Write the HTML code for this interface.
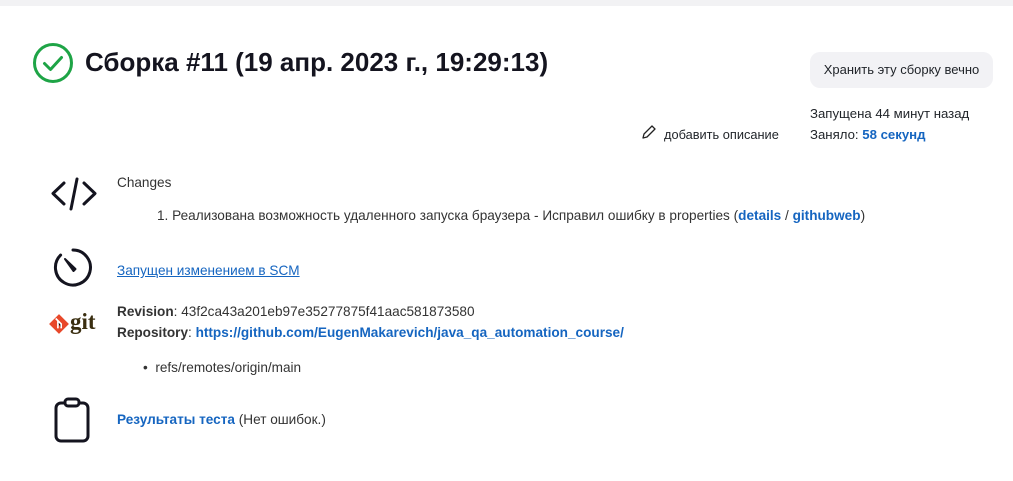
<!DOCTYPE html><html><head><meta charset="utf-8"><style>
body{margin:0;width:1013px;height:481px;background:#fff;font-family:"Liberation Sans",sans-serif;color:#1f2328;position:relative;overflow:hidden;font-size:13.6px}
.top{position:absolute;left:0;top:0;width:1013px;height:6px;background:#f2f2f4}
.a{position:absolute;white-space:nowrap}
a,.l{color:#1565c0;text-decoration:none;font-weight:bold}
</style></head><body>
<div class="top"></div>
<svg class="a" style="left:32px;top:42px" width="42" height="42" viewBox="0 0 42 42"><circle cx="21" cy="21" r="18.5" fill="none" stroke="#1ea446" stroke-width="3"/><path d="M12.5 21.5l6 6 11-12" fill="none" stroke="#1ea446" stroke-width="3" stroke-linecap="round" stroke-linejoin="round"/></svg>
<div class="a" style="left:85px;top:47px;font-size:26px;font-weight:bold;color:#14141f">Сборка #11 (19 апр. 2023 г., 19:29:13)</div>
<div class="a" style="left:810px;top:52px;width:183px;height:36px;background:#f2f2f5;border-radius:10px;text-align:center;line-height:36px;font-size:13px">Хранить эту сборку вечно</div>
<div class="a" style="left:810px;top:106px;font-size:13.2px">Запущена 44 минут назад</div>
<div class="a" style="left:810px;top:127px;font-size:13.2px">Заняло: <span class="l">58 секунд</span></div>
<svg class="a" style="left:641px;top:124px" width="16" height="16" viewBox="0 0 16 16"><path d="M2 14l1-4 8-8 3 3-8 8z" fill="none" stroke="#222" stroke-width="1.3" stroke-linejoin="round"/></svg>
<div class="a" style="left:664px;top:127px;font-size:12.8px">добавить описание</div>
<svg class="a" style="left:50px;top:176px" width="48" height="36" viewBox="0 0 48 36"><path d="M14 7L3 17.5 14 28M34 7l11 10.5L34 28M27 3l-6 30" fill="none" stroke="#14141f" stroke-width="3" stroke-linecap="round" stroke-linejoin="round"/></svg>
<div class="a" style="left:117px;top:175px;color:#333">Changes</div>
<div class="a" style="left:157px;top:208px;color:#333">1. Реализована возможность удаленного запуска браузера - Исправил ошибку в properties (<a>details</a> / <a>githubweb</a>)</div>
<svg class="a" style="left:51px;top:246px" width="44" height="44" viewBox="0 0 44 44"><path d="M22 4A17.5 17.5 0 1 1 9.6 9.1" fill="none" stroke="#14141f" stroke-width="3" stroke-linecap="round"/><path d="M14 13l10.5 10-2 2z" fill="#14141f" stroke="#14141f" stroke-width="2" stroke-linejoin="round"/></svg>
<div class="a" style="left:117px;top:263px;color:#1565c0;text-decoration:underline">Запущен изменением в SCM</div>
<svg class="a" style="left:48px;top:313px" width="22" height="22" viewBox="0 0 20 20"><path d="M10 1l9 9-9 9-9-9z" fill="#e8482a"/><path d="M7 5l5 5v4M9 7v7" stroke="#fff" stroke-width="1.5"/></svg>
<div class="a" style="left:70px;top:309px;font-family:'Liberation Serif',serif;font-weight:bold;font-size:23px;color:#3a2e10">git</div>
<div class="a" style="left:117px;top:304px;color:#333"><b>Revision</b>: 43f2ca43a201eb97e35277875f41aac581873580</div>
<div class="a" style="left:117px;top:325px;color:#333"><b>Repository</b>: <a>https://github.com/EugenMakarevich/java_qa_automation_course/</a></div>
<div class="a" style="left:143px;top:360px;color:#333">•&nbsp;&nbsp;refs/remotes/origin/main</div>
<svg class="a" style="left:53px;top:396px" width="40" height="48" viewBox="0 0 40 48"><rect x="3" y="7" width="32" height="38" rx="5" fill="none" stroke="#14141f" stroke-width="3"/><rect x="12" y="3" width="14" height="7" rx="3" fill="#fff" stroke="#14141f" stroke-width="3"/></svg>
<div class="a" style="left:117px;top:412px;color:#333"><a>Результаты теста</a> <span style="font-weight:normal">(Нет ошибок.)</span></div>
</body></html>
